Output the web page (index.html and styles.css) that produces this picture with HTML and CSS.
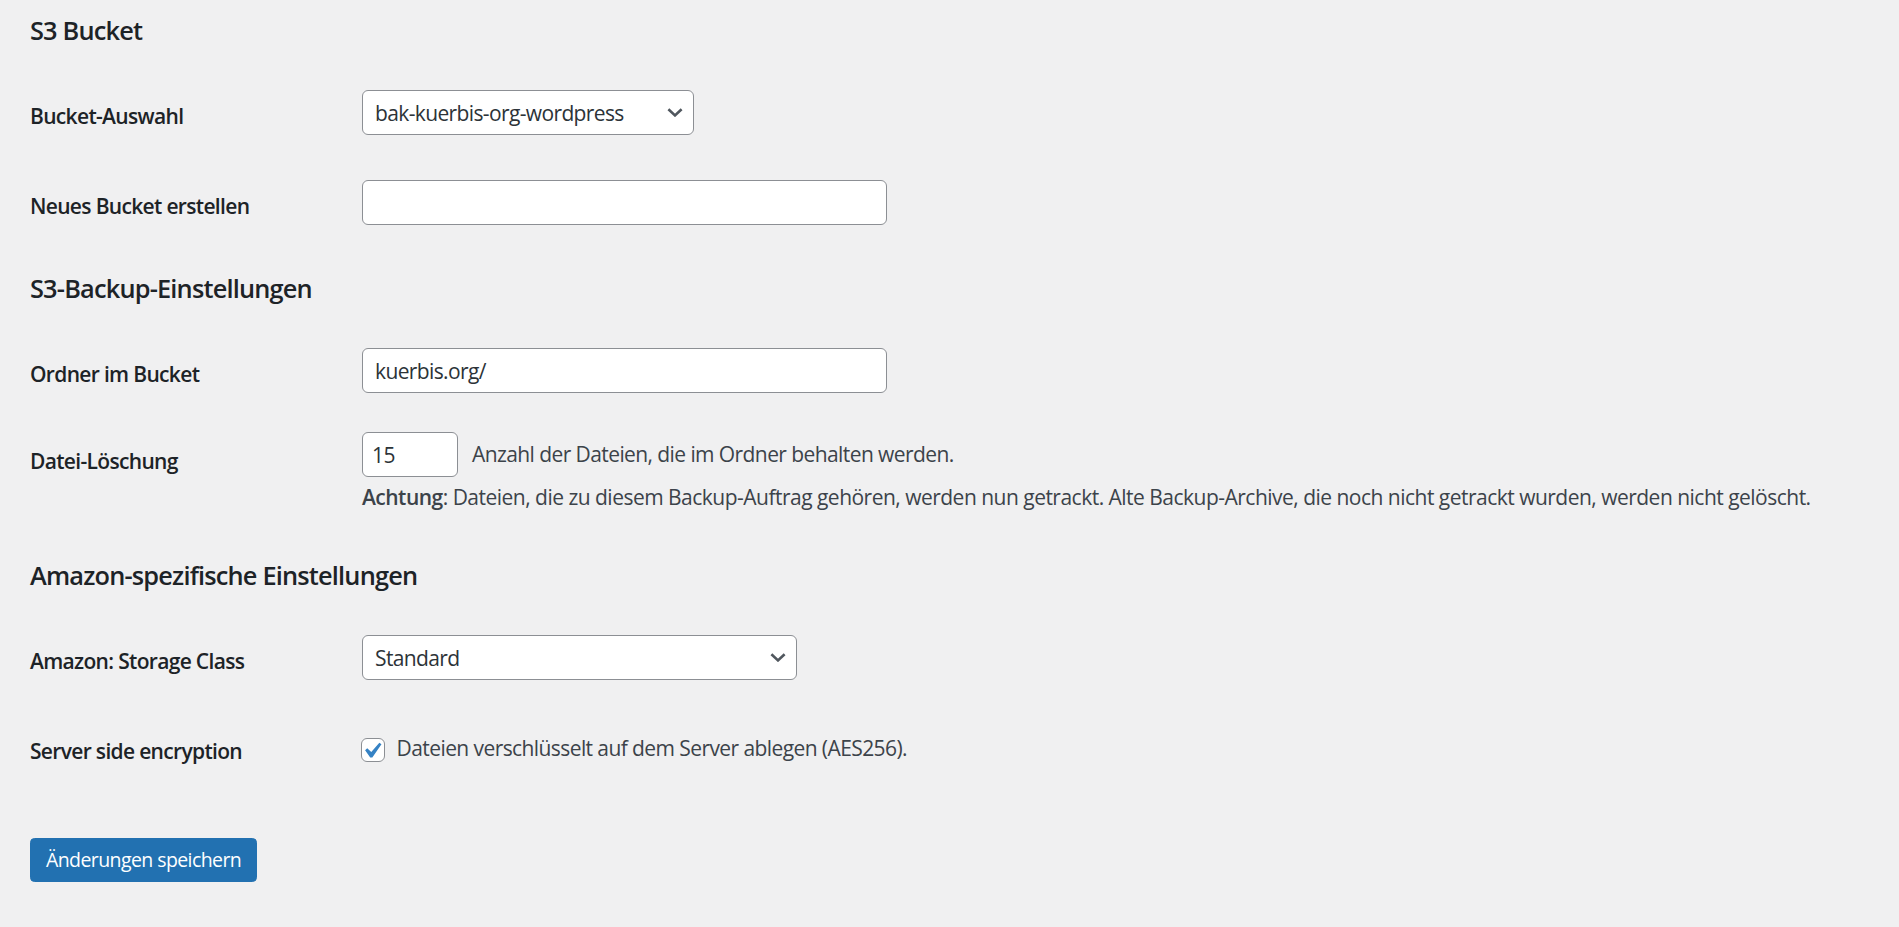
FILE: index.html
```html
<!DOCTYPE html>
<html lang="de">
<head>
<meta charset="utf-8">
<title>S3 Einstellungen</title>
<link rel="stylesheet" href="styles.css">
</head>
<body>
<div class="wrap">
  <h2 class="first">S3 Bucket</h2>
  <div class="form-table">
    <div class="row">
      <div class="th"><label for="bucket">Bucket-Auswahl</label></div>
      <div class="td">
        <div class="select-wrap">
          <select id="bucket" class="sel sel-bucket"><option>bak-kuerbis-org-wordpress</option></select>
          <svg class="chev" width="16" height="9" viewBox="0 0 16 9" aria-hidden="true"><path d="M1.4 1.3 L8 7.4 L14.6 1.3" fill="none" stroke="#50575e" stroke-width="2.6"/></svg>
        </div>
      </div>
    </div>
    <div class="row">
      <div class="th"><label for="newbucket">Neues Bucket erstellen</label></div>
      <div class="td"><input id="newbucket" class="txt regular" type="text" value=""></div>
    </div>
  </div>

  <h2>S3-Backup-Einstellungen</h2>
  <div class="form-table">
    <div class="row">
      <div class="th"><label for="folder">Ordner im Bucket</label></div>
      <div class="td td-folder"><input id="folder" class="txt regular" type="text" value="kuerbis.org/"></div>
    </div>
    <div class="row">
      <div class="th"><label for="maxfiles">Datei-Löschung</label></div>
      <div class="td td-files">
        <div class="inline">
          <input id="maxfiles" class="txt small" type="number" value="15">
          <span>Anzahl der Dateien, die im Ordner behalten werden.</span>
        </div>
        <p class="description"><strong>Achtung</strong>: Dateien, die zu diesem Backup-Auftrag gehören, werden nun getrackt. Alte Backup-Archive, die noch nicht getrackt wurden, werden nicht gelöscht.</p>
      </div>
    </div>
  </div>

  <h2>Amazon-spezifische Einstellungen</h2>
  <div class="form-table">
    <div class="row">
      <div class="th"><label for="storage">Amazon: Storage Class</label></div>
      <div class="td">
        <div class="select-wrap">
          <select id="storage" class="sel sel-storage"><option>Standard</option></select>
          <svg class="chev" width="16" height="9" viewBox="0 0 16 9" aria-hidden="true"><path d="M1.4 1.3 L8 7.4 L14.6 1.3" fill="none" stroke="#50575e" stroke-width="2.6"/></svg>
        </div>
      </div>
    </div>
    <div class="row">
      <div class="th"><label>Server side encryption</label></div>
      <div class="td">
        <label class="cb">
          <span class="checkbox"><svg width="31.5" height="31.5" viewBox="0 0 20 20" aria-hidden="true"><path d="M14.83 4.89l1.34.94-5.81 8.38H9.02L5.78 9.67l1.34-1.25 2.57 2.4z" fill="#3582c4"/></svg></span>
          <span class="cb-text">Dateien verschlüsselt auf dem Server ablegen (AES256).</span>
        </label>
      </div>
    </div>
  </div>

  <div class="submit">
    <button class="button-primary" type="button">Änderungen speichern</button>
  </div>
</div>
</body>
</html>
```

FILE: styles.css
```css
* {
  box-sizing: border-box;
}

html,
body {
  margin: 0;
  background: #f0f0f1;
}

body {
  font-family: "Open Sans", "Noto Sans", "Liberation Sans", sans-serif;
  color: #3c434a;
  font-size: 19.5px;
  line-height: 27.3px;
  letter-spacing: -0.03em;
}

.wrap {
  padding: 17px 0 0 30px;
}

h2 {
  font-size: 25.35px;
  line-height: 27.3px;
  font-weight: 600;
  color: #1d2327;
  margin: 27px 0 23.5px;
  letter-spacing: -0.032em;
}

h2.first {
  margin-top: 0;
}

.row {
  display: flex;
}

.th {
  width: 315px;
  flex: none;
  padding: 35px 15px 25px 0;
  align-self: flex-start;
}

.th label {
  font-size: 21px;
  line-height: 27.3px;
  font-weight: 600;
  color: #1d2327;
  letter-spacing: -0.032em;
}

.td {
  padding: 22.5px 15px 22.5px 17px;
  align-self: center;
  font-size: 21px;
  line-height: 27.3px;
}

.td-folder {
  padding-bottom: 19.8px;
}

.td-files {
  padding-top: 19.2px;
  padding-bottom: 23px;
}

.select-wrap {
  display: inline-grid;
  vertical-align: top;
}

.sel {
  grid-area: 1 / 1;
  -webkit-appearance: none;
  appearance: none;
  height: 45px;
  margin: 0;
  padding: 1px 36px 0 12px;
  border: 1.5px solid #8c8f94;
  border-radius: 6px;
  background: #fff;
  color: #2c3338;
  font-family: inherit;
  font-size: 21px;
  letter-spacing: -0.03em;
}

.sel-bucket {
  width: 332px;
}

.sel-storage {
  width: 435px;
}

.chev {
  grid-area: 1 / 1;
  justify-self: end;
  align-self: center;
  margin-right: 11.5px;
  pointer-events: none;
}

.txt {
  display: block;
  height: 45px;
  margin: 0;
  padding: 0 12px;
  border: 1.5px solid #8c8f94;
  border-radius: 6px;
  background: #fff;
  color: #2c3338;
  font-family: inherit;
  font-size: 21px;
  letter-spacing: -0.03em;
}

.regular {
  width: 525px;
}

.small {
  width: 96px;
  padding: 0 6px 0 9px;
  -moz-appearance: textfield;
}

.small::-webkit-outer-spin-button,
.small::-webkit-inner-spin-button {
  -webkit-appearance: none;
  margin: 0;
}

.inline {
  display: flex;
  align-items: center;
  gap: 14px;
}

.description {
  margin: 7.4px 0 0;
  font-size: 21px;
  line-height: 27.3px;
  white-space: nowrap;
  letter-spacing: -0.0245em;
}

.description strong {
  font-weight: 600;
  color: #3c434a;
}

.cb {
  display: flex;
  align-items: center;
  gap: 11.6px;
}

.checkbox {
  display: flex;
  flex: none;
  width: 24px;
  height: 24px;
  margin: 7px 0 0 -1px;
  border: 1.5px solid #8c8f94;
  border-radius: 6px;
  background: #fff;
}

.checkbox svg {
  flex: none;
  margin: -3.5px 0 0 -6.3px;
}

.cb-text {
  padding-top: 5.5px;
}

.submit {
  display: flex;
  padding-top: 48px;
}

.button-primary {
  height: 44px;
  padding: 0 15px;
  border: 1.5px solid #2271b1;
  border-radius: 4.5px;
  background: #2271b1;
  color: #fff;
  font-family: inherit;
  font-size: 19.5px;
  line-height: 41px;
  letter-spacing: -0.03em;
  cursor: pointer;
}
```
